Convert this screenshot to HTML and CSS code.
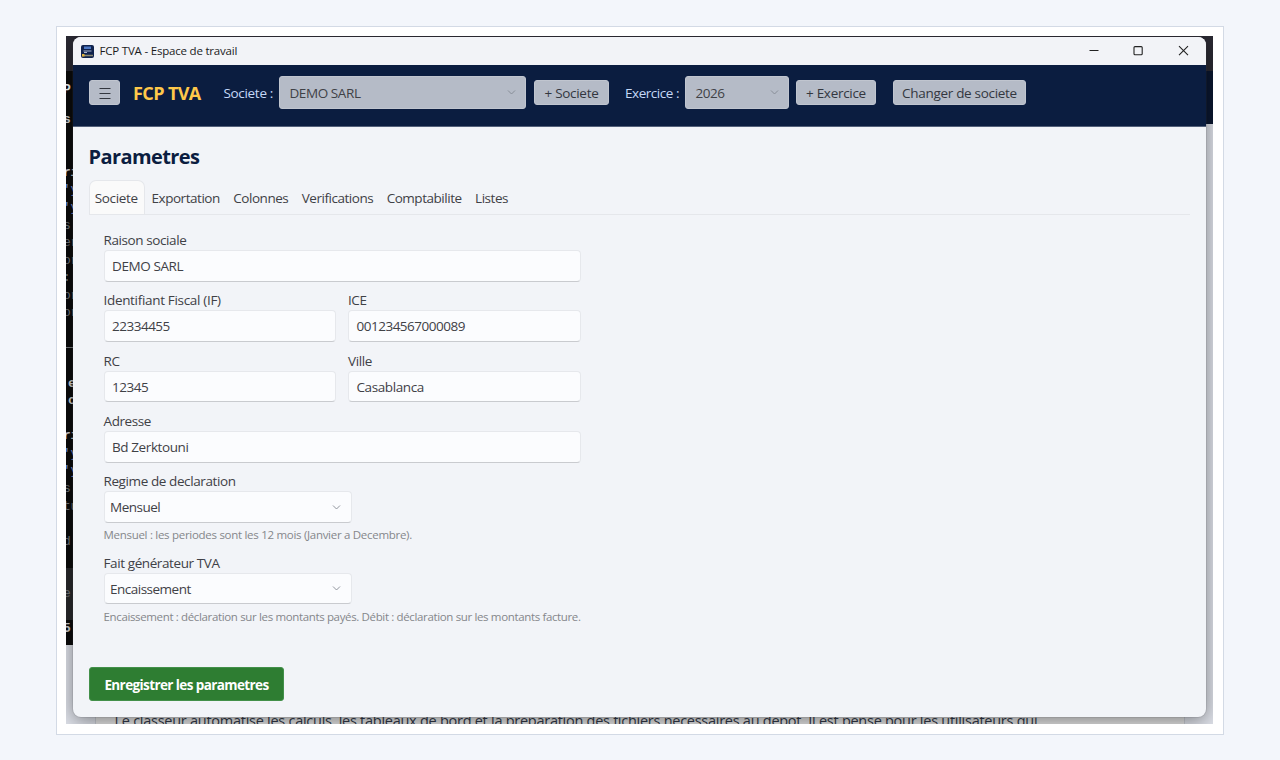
FILE: index.html
```html
<!DOCTYPE html>
<html lang="fr">

	<head>
		<meta charset="UTF-8" />
		<meta name="viewport" content="width=device-width, initial-scale=1.0" />
		<title>FCP TVA</title>
		<link rel="stylesheet" href="styles.css">
	</head>

	<body>
		<div class="frame">
			<div class="desktop">
				<div class="terminal">
					<div class="terminal-bar"></div>
					<div class="line first">P</div>
					<div class="line"></div>
					<div class="line bold">s</div>
					<div class="line"></div>
					<div class="line"></div>
					<div class="line bold">ri</div>
					<div class="line blue">'y</div>
					<div class="line blue">'y</div>
					<div class="line">s</div>
					<div class="line">er</div>
					<div class="line">or</div>
					<div class="line">:</div>
					<div class="line">or</div>
					<div class="line">or</div>
					<div class="line"></div>
					<div class="line rule"></div>
					<div class="line"></div>
					<div class="line bold inner">e</div>
					<div class="line bold inner">c</div>
					<div class="line"></div>
					<div class="line bold">ri</div>
					<div class="line blue">'y</div>
					<div class="line blue">'y</div>
					<div class="line">s</div>
					<div class="line">tu</div>
					<div class="line"></div>
					<div class="line">d</div>
					<div class="line"></div>
					<div class="line input-area"></div>
					<div class="line input-area">e</div>
					<div class="line input-area"></div>
					<div class="line bold">5</div>
				</div>
				<div class="browser">
					<div class="browser-bar"></div>
					<div class="browser-nav"></div>
				</div>
				<div class="article">
					<p>Le classeur automatise les calculs, les tableaux de bord et la preparation des fichiers necessaires au depot. Il est pense pour les utilisateurs qui</p>
				</div>

				<div class="window">
					<div class="titlebar">
						<svg class="app-icon" viewBox="0 0 13 13">
							<rect width="13" height="13" rx="2" fill="#10224d" />
							<rect x="3" y="1.5" width="7" height="2.5" fill="#4d78c4" />
							<path d="M2.5 6h8M3 7.5h3" stroke="#a9b4cf" />
							<path d="M1 10.5h11" stroke="#8d8a72" stroke-width="1.6" />
							<path d="M1 9h2.5v2.5H1z" fill="#e0b23c" />
						</svg>
						<span class="title">FCP TVA - Espace de travail</span>
						<svg class="controls" viewBox="0 0 100 12">
							<path d="M.5 5.5h9" />
							<rect x="45" y="1.6" width="8.2" height="8.2" rx="1" />
							<path d="M90 1.2l9 9M99 1.2l-9 9" />
						</svg>
					</div>

					<div class="navbar">
						<button class="btn burger">
							<svg viewBox="0 0 12 12"><path d="M.5 1.5h11M.5 6.5h11M.5 11.5h11" /></svg>
						</button>
						<span class="brand">FCP TVA</span>
						<span class="nav-label">Societe :</span>
						<div class="select company">DEMO SARL <svg viewBox="0 0 8 5"><path d="M.5.5L4 4 7.5.5" /></svg></div>
						<button class="btn add-company">+ Societe</button>
						<span class="nav-label year-label">Exercice :</span>
						<div class="select year">2026 <svg viewBox="0 0 8 5"><path d="M.5.5L4 4 7.5.5" /></svg></div>
						<button class="btn add-year">+ Exercice</button>
						<button class="btn switch">Changer de societe</button>
					</div>

					<div class="content">
						<h1>Parametres</h1>
						<div class="tabs">
							<span class="tab active">Societe</span>
							<span class="tab">Exportation</span>
							<span class="tab">Colonnes</span>
							<span class="tab">Verifications</span>
							<span class="tab">Comptabilite</span>
							<span class="tab">Listes</span>
						</div>

						<form class="form">
							<div class="field wide">
								<label>Raison sociale</label>
								<div class="input">DEMO SARL</div>
							</div>
							<div class="field">
								<label class="fiscal">Identifiant Fiscal (IF)</label>
								<div class="input number">22334455</div>
							</div>
							<div class="field">
								<label>ICE</label>
								<div class="input number">001234567000089</div>
							</div>
							<div class="field">
								<label>RC</label>
								<div class="input number">12345</div>
							</div>
							<div class="field">
								<label>Ville</label>
								<div class="input">Casablanca</div>
							</div>
							<div class="field wide">
								<label>Adresse</label>
								<div class="input">Bd Zerktouni</div>
							</div>
							<div class="field wide">
								<label>Regime de declaration</label>
								<div class="input dropdown">Mensuel <svg viewBox="0 0 8 5"><path d="M.5.5L4 4 7.5.5" /></svg></div>
								<p class="hint">Mensuel : les periodes sont les 12 mois (Janvier a Decembre).</p>
							</div>
							<div class="field wide">
								<label>Fait générateur TVA</label>
								<div class="input dropdown">Encaissement <svg viewBox="0 0 8 5"><path d="M.5.5L4 4 7.5.5" /></svg></div>
								<p class="hint long">Encaissement : déclaration sur les montants payés. Débit : déclaration sur les montants facture.</p>
							</div>
						</form>

						<button class="save">Enregistrer les parametres</button>
					</div>
				</div>
			</div>
		</div>
	</body>

</html>
```
FILE: styles.css
```css
* {
	box-sizing: border-box;
}

body {
	margin: 0;
	height: 760px;
	padding: 26px 56px;
	overflow: hidden;
	background: #f3f6fb;
	font: 13.5px/18px "Open Sans", "Noto Sans", sans-serif;
	letter-spacing: -0.4px;
	color: #3f4146;
}

.frame {
	width: 1168px;
	height: 709px;
	padding: 9px;
	border: 1px solid #d3dae5;
	background: #fff;
}

.desktop {
	position: relative;
	width: 1147px;
	height: 688px;
	overflow: hidden;
	background: #dfe2ea;
}

/* windows behind the application */
.terminal {
	position: absolute;
	left: 0;
	top: 0;
	width: 640px;
	height: 609px;
	background: #0c0c0c;
	color: #77797c;
	font: 13px/17.57px "Liberation Mono", monospace;
}

.terminal-bar {
	height: 35px;
	margin-bottom: 5px;
	background: #2b2a33;
}

.line {
	height: 17.57px;
	margin-left: -3px;
	white-space: pre;
}

.first {
	position: relative;
	top: 5px;
	color: #fff;
	font-weight: bold;
}

.bold {
	color: #d5d5d5;
	font-weight: bold;
}

.inner {
	padding-left: 5px;
}

.blue {
	color: #7f95dc;
}

.rule {
	height: 9px;
	margin-bottom: 8.57px;
	border-bottom: 1px solid #77797c;
}

.input-area {
	background: #2a2a2c;
}

.browser {
	position: absolute;
	right: 0;
	top: 0;
	width: 507px;
	height: 88px;
}

.browser-bar {
	height: 35px;
	background: #2b2a33;
}

.browser-nav {
	height: 53px;
	background: #0b1730;
}

.article {
	position: absolute;
	left: 29px;
	bottom: 0;
	width: 1090px;
	height: 60px;
	border: solid #c9cdd4;
	border-width: 0 1px;
	background: #e6e6e6;
}

.article p {
	margin: 48px 0 0 18.5px;
	white-space: nowrap;
	font-size: 14.5px;
	letter-spacing: -0.265px;
	color: #333a4a;
}

.window {
	position: absolute;
	left: 7px;
	top: 1px;
	width: 1133px;
	height: 680px;
	border-radius: 8px;
	overflow: hidden;
	background: #f2f4f8;
	box-shadow: 0 0 0 1px rgba(70, 70, 80, 0.12), 0 4px 20px rgba(0, 0, 0, 0.45);
}

.titlebar {
	display: flex;
	align-items: center;
	height: 28px;
	padding: 0 17px 0 8px;
	background: #f2f3f7;
}

.app-icon {
	width: 13px;
	height: 13px;
}

.title {
	margin-left: 5.5px;
	font-size: 11.5px;
	letter-spacing: -0.2px;
	color: #1b1b1d;
}

.controls {
	width: 100px;
	height: 12px;
	margin-left: auto;
	fill: none;
	stroke: #222;
	stroke-width: 1.1;
}

.navbar {
	display: flex;
	align-items: center;
	height: 62px;
	padding: 0 16px 7px;
	background: #0b1d40;
	border-bottom: 1px solid #53607a;
}

.btn {
	height: 25px;
	padding: 1px 0 0;
	border: 1px solid #c0c5cf;
	border-radius: 3px;
	background: #b5bbc7;
	font: inherit;
	letter-spacing: -0.3px;
	color: #33373f;
}

.burger {
	display: flex;
	align-items: center;
	justify-content: center;
	width: 31px;
}

.burger svg {
	width: 12px;
	height: 12px;
	fill: none;
	stroke: #33373f;
	stroke-width: 1;
}

.brand {
	width: 91px;
	padding: 2px 0 0 13px;
	font-size: 18px;
	font-weight: bold;
	letter-spacing: -0.6px;
	color: #ffc84a;
	white-space: nowrap;
}

.nav-label {
	width: 68.4px;
	padding: 2px 0 0 12.4px;
	white-space: nowrap;
	letter-spacing: -0.3px;
	color: #c5d8f7;
}

.select,
.dropdown {
	display: flex;
	align-items: center;
	justify-content: space-between;
}

.select {
	height: 33px;
	padding: 1px 9px 0 9px;
	border: 1px solid #c0c5cf;
	border-radius: 3px;
	background: #b5bbc7;
}

.select svg,
.dropdown svg {
	width: 9px;
	height: 5px;
	fill: none;
	stroke: #858a93;
	stroke-width: 0.9;
}

.company {
	width: 246.6px;
}

.add-company {
	width: 75px;
	margin-left: 8px;
}

.year-label {
	width: 76.4px;
	padding-left: 16px;
	letter-spacing: -0.45px;
}

.year {
	width: 103.6px;
}

.add-year {
	width: 80px;
	margin-left: 7px;
}

.switch {
	width: 133px;
	margin-left: 17px;
}

.content {
	padding: 16px 16px 0;
}

h1 {
	margin: 0 0 0 -0.5px;
	font-size: 20px;
	line-height: 28px;
	letter-spacing: -0.6px;
	color: #0b1d40;
}

.tabs {
	display: flex;
	height: 35px;
	margin: 9px 0 0 -0.5px;
	border-bottom: 1px solid #e5e7eb;
}

.tab {
	height: 34px;
	padding: 0 6.9px 0 6.5px;
	line-height: 36px;
	letter-spacing: -0.46px;
}

.active {
	padding: 0 6.3px 0 5.3px;
	border: 1px solid #e5e7eb;
	border-bottom: 0;
	border-radius: 7px 7px 0 0;
	background: #fafafa;
	line-height: 34px;
	letter-spacing: -0.35px;
}

.form {
	display: grid;
	grid-template-columns: 232.5px 232.5px;
	column-gap: 12px;
	margin: 16px 0 0 14.5px;
}

.wide {
	grid-column: span 2;
}

.field {
	min-height: 60.35px;
}

label {
	display: block;
	height: 19px;
	line-height: 19px;
}

.fiscal {
	letter-spacing: -0.32px;
}

.input {
	height: 31.5px;
	padding: 0 7.5px;
	border: 1px solid #e6e8ec;
	border-bottom-color: #c9cbcf;
	border-radius: 4px;
	background: #fbfcfe;
	line-height: 31.5px;
}

.number {
	letter-spacing: -0.49px;
}

.dropdown {
	width: 248px;
	padding: 2px 10px 0 5.5px;
	letter-spacing: -0.5px;
}

.dropdown svg {
	margin-top: -2px;
}

.hint {
	margin: 3px 0 11px;
	font-size: 11.5px;
	line-height: 17px;
	letter-spacing: -0.29px;
	color: #85878b;
	white-space: nowrap;
}

.long {
	margin-top: 4px;
	letter-spacing: -0.355px;
}

.save {
	width: 195px;
	height: 34px;
	margin-top: 31px;
	padding: 1px 0 0;
	border: 1px solid #43904a;
	border-radius: 3px;
	background: #2e7d32;
	font: inherit;
	font-weight: bold;
	letter-spacing: -0.6px;
	color: #fff;
}
```
